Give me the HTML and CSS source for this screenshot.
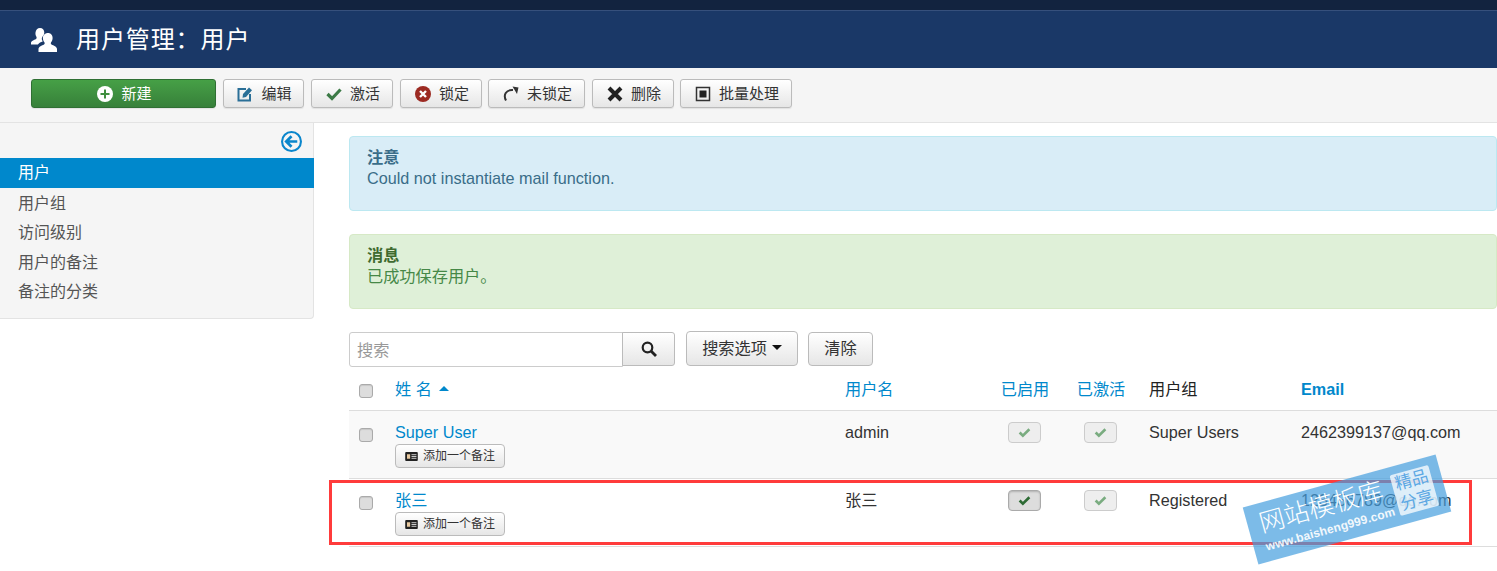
FILE: index.html
```html
<!DOCTYPE html>
<html lang="zh">
<head>
<meta charset="utf-8">
<title>用户管理：用户</title>
<link rel="stylesheet" href="styles.css">
</head>
<body>
<div class="topbar"></div>
<header class="header">
  <svg class="header-icon" viewBox="0 0 26 24"><path fill="#fff" d="M9 0c2.600 0 4.300 2 4.300 4.500 0 1.200-.4 2.300-1 3.200-1.200 1-1.700 2.300-1.400 3.800.1.700.5 1.300 1 1.800-2 .8-4 1.700-5 3.200H0v-1.500c0-2 3-3 5-4 .8-.4.8-1.300.4-2.200C4.600 7.500 4.300 6 4.500 4.500 4.800 2 6.500 0 9 0z"/><path fill="#fff" d="M17 5c2.900 0 4.600 2.300 4.600 5 0 1.700-.7 3.300-1.500 4.300-.5.900-.4 1.800.4 2.200 2 1 5.500 2 5.500 4.500v3H7.500v-3c0-2.500 3.500-3.500 5.500-4.500.8-.4.900-1.300.4-2.200-.8-1-1.500-2.600-1.500-4.300 0-2.700 2.200-5 5.100-5z"/></svg>
  <h1 class="title">用户管理：用户</h1>
</header>
<div class="toolbar">
  <button class="btn btn-new"><svg class="ico" viewBox="0 0 16 16"><circle cx="8" cy="8" r="8" fill="#fff"/><path d="M8 3.500v9M3.500 8h9" stroke="#3f8f3f" stroke-width="2"/></svg>新建</button>
  <button class="btn btn-edit"><svg class="ico" viewBox="0 0 16 16"><path fill="none" stroke="#2a6f97" stroke-width="2" d="M9 3H1.500v11.500H13V8"/><path fill="#2a6f97" d="M6 8l6-6.500 3 2.800L9 11l-3.500.7z"/></svg>编辑</button>
  <button class="btn"><svg class="ico" viewBox="0 0 16 16"><path fill="none" stroke="#3c7a46" stroke-width="3.200" d="M1.500 8l4.500 4.500L14.500 3.500"/></svg>激活</button>
  <button class="btn"><svg class="ico" viewBox="0 0 16 16"><circle cx="8" cy="8" r="8" fill="#9c2a22"/><path d="M5 5l6 6M11 5l-6 6" stroke="#fff" stroke-width="2.400"/></svg>锁定</button>
  <button class="btn btn-unlock"><svg class="ico" viewBox="0 0 16 16"><path fill="none" stroke="#333" stroke-width="2" d="M3 14.500C0 9 3 3.500 10 4"/><path fill="#333" d="M9.500 0.500L15.500 1.500 14 8z"/></svg>未锁定</button>
  <button class="btn btn-del"><svg class="ico" viewBox="0 0 16 16"><path stroke="#222" stroke-width="4" d="M2 2l12 12M14 2L2 14"/></svg>删除</button>
  <button class="btn btn-batch"><svg class="ico" viewBox="0 0 16 16"><path fill="none" stroke="#333" stroke-width="1.500" d="M1.500 1.500h13v13h-13z"/><path fill="#222" d="M4.500 4.500h7v7h-7z"/></svg>批量处理</button>
</div>
<div class="layout">
  <aside class="sidebar">
    <div class="collapse"><svg class="collapse-icon" viewBox="0 0 20 20"><circle cx="10" cy="10" r="9" fill="none" stroke="#0a86cc" stroke-width="2"/><path d="M15.500 10H6M10 5l-5 5 5 5" fill="none" stroke="#0a86cc" stroke-width="2.600"/></svg></div>
    <a class="side-item active">用户</a>
    <a class="side-item">用户组</a>
    <a class="side-item">访问级别</a>
    <a class="side-item">用户的备注</a>
    <a class="side-item">备注的分类</a>
  </aside>
  <main class="main">
    <div class="alert alert-info"><b class="alert-h">注意</b><span>Could not instantiate mail function.</span></div>
    <div class="alert alert-ok"><b class="alert-h">消息</b><span>已成功保存用户。</span></div>
    <div class="search">
      <div class="search-group">
        <div class="search-input">搜索</div>
        <button class="search-btn"><svg class="search-ico" viewBox="0 0 16 16"><circle cx="6.500" cy="6.500" r="4.800" fill="none" stroke="#222" stroke-width="2.200"/><path d="M10 10l5 5" stroke="#222" stroke-width="2.800"/></svg></button>
      </div>
      <button class="sbtn sbtn-opts">搜索选项<i class="caret"></i></button>
      <button class="sbtn sbtn-clear">清除</button>
    </div>
    <div class="row row-head">
      <div><i class="checkbox"></i></div>
      <div class="th-link">姓 名<i class="caret-up"></i></div>
      <div class="th-link">用户名</div>
      <div class="th-link center">已启用</div>
      <div class="th-link center">已激活</div>
      <div class="group">用户组</div>
      <div class="th-link th-email">Email</div>
    </div>
    <div class="row row-alt">
      <div><i class="checkbox"></i></div>
      <div><a class="name">Super User</a><button class="note"><svg class="note-ico" viewBox="0 0 14 10"><rect width="14" height="10" rx="1" fill="#222"/><rect x="2" y="2.500" width="3.500" height="5" fill="#e8c9a0"/><path d="M7 3h5.500M7 5h5.500M7 7h5.500" stroke="#ddd"/></svg>添加一个备注</button></div>
      <div>admin</div>
      <div class="center"><span class="state"><svg class="state-ico" viewBox="0 0 16 16"><path fill="none" stroke="#7aac80" stroke-width="3.200" d="M2 8l4 4 8-8"/></svg></span></div>
      <div class="center"><span class="state"><svg class="state-ico" viewBox="0 0 16 16"><path fill="none" stroke="#7aac80" stroke-width="3.200" d="M2 8l4 4 8-8"/></svg></span></div>
      <div class="group">Super Users</div>
      <div>2462399137@qq.com</div>
    </div>
    <div class="row">
      <div><i class="checkbox"></i></div>
      <div><a class="name">张三</a><button class="note"><svg class="note-ico" viewBox="0 0 14 10"><rect width="14" height="10" rx="1" fill="#222"/><rect x="2" y="2.500" width="3.500" height="5" fill="#e8c9a0"/><path d="M7 3h5.500M7 5h5.500M7 7h5.500" stroke="#ddd"/></svg>添加一个备注</button></div>
      <div>张三</div>
      <div class="center"><span class="state state-on"><svg class="state-ico" viewBox="0 0 16 16"><path fill="none" stroke="#2d6b34" stroke-width="3.200" d="M2 8l4 4 8-8"/></svg></span></div>
      <div class="center"><span class="state"><svg class="state-ico" viewBox="0 0 16 16"><path fill="none" stroke="#7aac80" stroke-width="3.200" d="M2 8l4 4 8-8"/></svg></span></div>
      <div class="group">Registered</div>
      <div>123456789@qq.com</div>
    </div>
  </main>
</div>
<div class="highlight"></div>
<div class="stamp">
  <div class="stamp-text"><div class="stamp-name">网站模板库</div><div class="stamp-url">www.baisheng999.com</div></div>
  <div class="stamp-box">精品<br>分享</div>
</div>
</body>
</html>
```
FILE: styles.css
```css
* { box-sizing: border-box; }
html, body { margin: 0; height: 571px; overflow: hidden; }
body {
  position: relative;
  background: #fff;
  color: #333;
  font: 16.2px/20px "Liberation Sans", "Noto Sans CJK SC", sans-serif;
}
button { font: inherit; color: inherit; }
.topbar { height: 11px; background: #12233f; border-bottom: 1px solid #36507c; }
.header { height: 57px; background: #1a3867; display: flex; align-items: center; padding-left: 31px; }
.header-icon { width: 26px; height: 24px; margin-right: 19px; }
.title { margin: 0; color: #fff; font-size: 24px; font-weight: 400; line-height: 30px; letter-spacing: .9px; }
.toolbar {
  height: 55px; background: #f5f5f5; border-bottom: 1px solid #e3e3e3;
  display: flex; align-items: flex-start; gap: 7px; padding: 11px 0 0 31px;
}
.btn {
  width: 82px; height: 29px; padding: 0 0 0 2px; display: flex; align-items: center; justify-content: center;
  font-size: 15px; color: #333; background: linear-gradient(#fff, #e6e6e6);
  border: 1px solid #bbb; border-radius: 3px; box-shadow: 0 1px 1px rgba(0,0,0,.08);
}
.ico { width: 16px; height: 16px; margin-right: 8px; flex: none; }
.btn-new { width: 185px; color: #fff; background: linear-gradient(#46a046, #37803a); border-color: #2f6f33; }
.btn-edit { width: 81px; }
.btn-unlock { width: 97px; margin-left: -1px; }
.btn-del { width: 82px; }
.btn-batch { width: 112px; margin-left: -1px; }
.layout { display: flex; align-items: flex-start; }
.sidebar {
  width: 314px; height: 196px; background: #f5f5f5; border: 1px solid #e3e3e3; border-width: 0 1px 1px 0;
  border-bottom-right-radius: 4px; font-size: 16px; color: #555; padding-top: 8px; flex: none;
}
.collapse { height: 27px; display: flex; justify-content: flex-end; padding-right: 11px; }
.collapse-icon { width: 21px; height: 21px; }
.side-item { display: block; height: 29.5px; line-height: 30px; padding-left: 18px; }
.side-item.active { height: 30px; margin-bottom: .5px; background: #0088cc; color: #fff; margin-right: -1px; }
.main { flex: 1; padding: 13px 0 0 35px; min-width: 0; }
.alert {
  height: 75px; margin-bottom: 23px; padding: 10px 17px; border: 1px solid; border-radius: 4px;
  display: flex; flex-direction: column; gap: 1px;
}
.alert-h { font-weight: 700; }
.alert-info { background: #d9edf7; border-color: #bce8f1; color: #3a6d89; }
.alert-ok { background: #dff0d8; border-color: #d6e9c6; color: #468847; }
.alert-ok .alert-h { color: #3f6b30; }
.search { display: flex; align-items: flex-start; height: 35px; }
.search-group { display: flex; height: 35px; }
.search-input {
  width: 274px; height: 35px; line-height: 35px; padding-left: 7px; color: #999;
  border: 1px solid #ccc; border-radius: 3px 0 0 3px; background: #fff;
}
.search-btn {
  width: 53px; height: 34px; margin-left: -1px; border: 1px solid #bbb; border-radius: 0 3px 3px 0;
  background: linear-gradient(#fff, #e6e6e6); display: flex; align-items: center; justify-content: center; padding: 0;
}
.search-ico { width: 16px; height: 16px; }
.sbtn {
  padding: 0 0 2px; border: 1px solid #bbb; border-radius: 4px; background: linear-gradient(#fff, #e6e6e6);
  display: flex; align-items: center; justify-content: center; color: #333;
}
.sbtn-opts { width: 112px; height: 35px; margin: -1px 0 0 11px; }
.sbtn-clear { width: 65px; height: 34px; margin-left: 10px; }
.caret { margin-left: 5px; border: 5px solid transparent; border-top-color: #111; border-bottom: 0; }
.caret-up { display: inline-block; margin-left: 7px; vertical-align: 4px; border: 5px solid transparent; border-bottom-color: #0088cc; border-top: 0; }
.row {
  display: grid; grid-template-columns: 46px 450px 141px 76px 76px 163px 1fr;
  height: 68px; border-bottom: 1px solid #ddd; padding-top: 11px;
}
.row-head { height: 40px; margin-top: 4px; padding-top: 8px; }
.row-head .center { padding-left: 2px; }
.row-alt { background: #f9f9f9; }
.th-link { color: #0088cc; }
.th-email { font-weight: 700; }
.center { text-align: center; }
.group { padding-left: 11px; }
.row-head .group { color: #222; }
.checkbox {
  display: block; width: 14px; height: 14px; margin: 6px 0 0 10px;
  background: #ddd; border: 1px solid #aaa; border-radius: 3px; box-shadow: inset 0 1px 1px rgba(0,0,0,.1);
}
.row-head .checkbox { margin-top: 5px; }
.name { display: block; color: #0088cc; height: 20px; }
.note {
  margin-top: 2px; width: 110px; height: 24px; padding: 0; font-size: 12px; color: #333;
  display: flex; align-items: center; justify-content: center;
  border: 1px solid #bbb; border-radius: 4px; background: linear-gradient(#fff, #e6e6e6);
}
.note-ico { width: 13px; height: 9px; margin-right: 5px; }
.state {
  display: inline-flex; align-items: center; justify-content: center; width: 33px; height: 21px;
  border: 1px solid #ccc; border-radius: 4px; background: #eee;
}
.state-on { background: #ddd; border-color: #aaa; box-shadow: inset 0 1px 2px rgba(0,0,0,.2); }
.state-ico { width: 13px; height: 13px; }
.highlight { position: absolute; left: 329px; top: 480px; width: 1143px; height: 65px; border: 3px solid #ff3b3b; }
.stamp {
  position: absolute; left: 1247px; top: 480px; width: 200px; height: 59px;
  transform: rotate(-15.4deg); background: rgba(69,158,222,.7); color: #fff;
  display: flex; justify-content: space-between; padding: 5px 10px 0 12px;
}
.stamp-name { font-size: 25.5px; line-height: 30px; font-weight: 300; white-space: nowrap; }
.stamp-url { font-size: 12px; line-height: 16px; font-weight: 700; opacity: .9; margin-top: 1px; letter-spacing: .1px; }
.stamp-box {
  width: 40px; height: 42px; margin-top: 3px; background: rgba(255,255,255,.75); color: #5ca8e4; font-size: 17px; line-height: 21px;
  text-align: center; border-radius: 2px; flex: none; white-space: nowrap;
}
```
